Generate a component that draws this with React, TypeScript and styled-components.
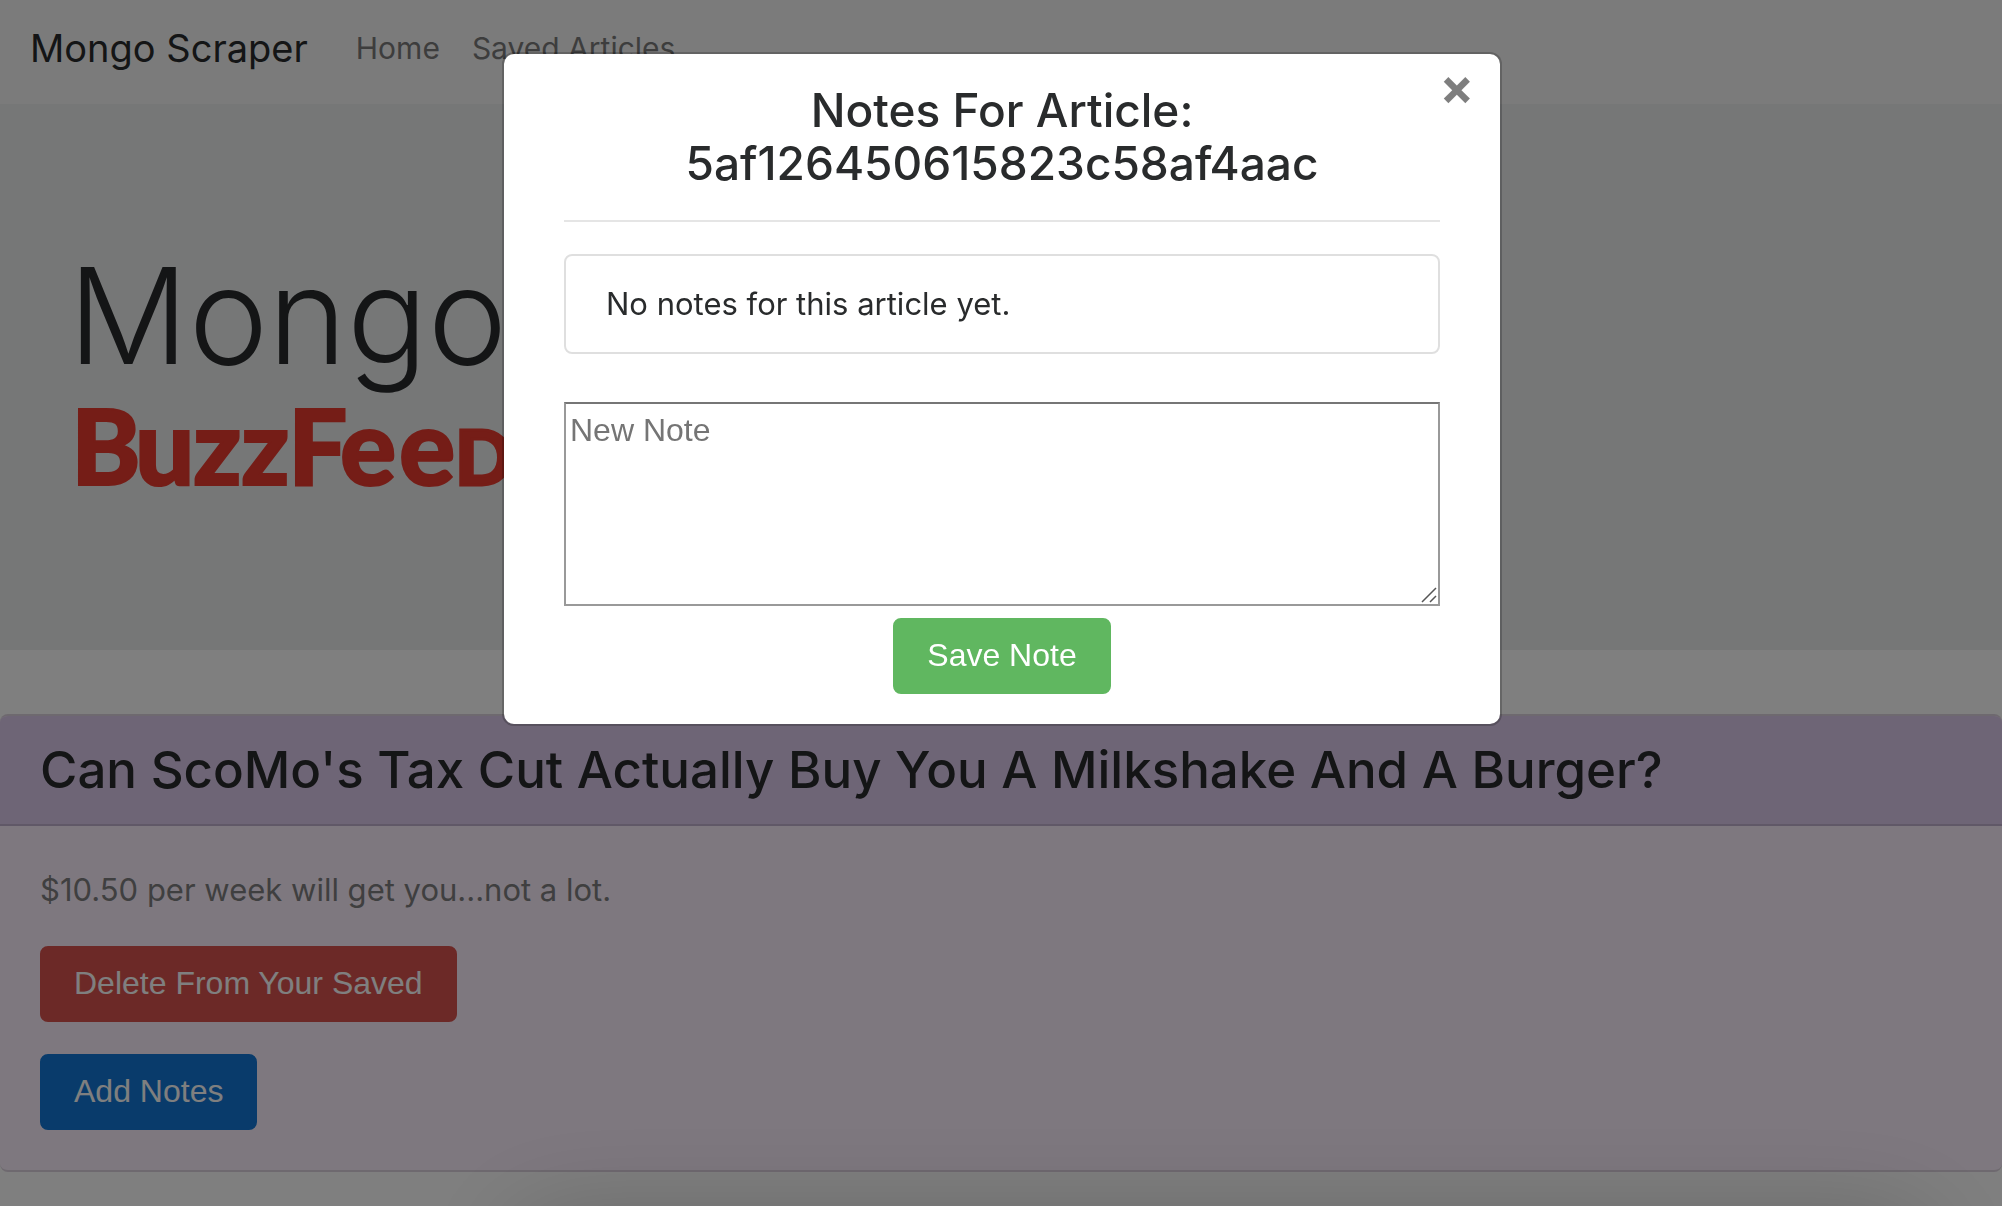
import React, { useState } from "react";
import styled, { createGlobalStyle } from "styled-components";

const uiFont = `Inter, "Liberation Sans", sans-serif`;
const controlFont = `"Liberation Sans", Arial, sans-serif`;

const GlobalStyle = createGlobalStyle`
  *, *::before, *::after { box-sizing: border-box; }
  body {
    margin: 0;
    background: #fff;
    color: #292b2c;
    font-family: ${uiFont};
    font-size: 31px;
    line-height: 48px;
    overflow: hidden;
  }
  h1, h2, h3, p { margin: 0; }
`;

const Page = styled.div`
  min-height: 100vh;
`;

const Navbar = styled.nav`
  display: flex;
  align-items: center;
  gap: 48px;
  padding: 18px 30px 26px;
  background: #f7f7f7;
`;

const Brand = styled.a`
  color: #292b2c;
  font-size: 38px;
  line-height: 60px;
  text-decoration: none;
`;

const NavLinks = styled.div`
  display: flex;
  gap: 32px;
`;

const NavLink = styled.a`
  color: #7b7b7b;
  font-size: 30px;
  text-decoration: none;
`;

const Jumbotron = styled.header`
  padding: 128px 68px;
  margin-bottom: 64px;
  background: #eceeef;
`;

const Display = styled.h1`
  margin-bottom: 8px;
  font-size: 134px;
  font-weight: 300;
  line-height: 166px;
  white-space: nowrap;
`;

const Logo = styled.svg`
  display: block;
  width: 480px;
  height: 116px;
  overflow: visible;
  fill: #eb3a2e;
  stroke: #eb3a2e;
  stroke-width: 2px;
  font-family: Lato, sans-serif;
  font-weight: 900;
`;

const Card = styled.article`
  border: solid rgba(0, 0, 0, 0.125);
  border-width: 2px 0;
  border-radius: 8px;
  background: #fdf1ff;
  overflow: hidden;
`;

const CardHeader = styled.div`
  padding: 24px 40px;
  border-bottom: 2px solid rgba(0, 0, 0, 0.125);
  background: #dccaec;
`;

const CardTitle = styled.h2`
  font-size: 51px;
  font-weight: 500;
  line-height: 60px;
`;

const CardBody = styled.div`
  display: flex;
  flex-direction: column;
  align-items: flex-start;
  gap: 32px;
  padding: 40px;
`;

const Summary = styled.p`
  color: #7f7f80;
`;

const tones = { danger: "#d9534f", primary: "#1277d6", success: "#60b760" };

const Button = styled.button<{ $tone: keyof typeof tones }>`
  padding: 13px 32px 15px;
  border: 2px solid ${({ $tone }) => tones[$tone]};
  border-radius: 8px;
  background: ${({ $tone }) => tones[$tone]};
  color: #fff;
  font-family: ${controlFont};
  font-size: 32px;
  line-height: 44px;
  cursor: pointer;
`;

const Backdrop = styled.div`
  position: fixed;
  inset: 0;
  background: rgba(0, 0, 0, 0.5);
  padding: 52px 15px 52px 17px;
  overflow: hidden;

  /* soft shade rising from the bottom edge of the window */
  &::after {
    content: "";
    position: absolute;
    left: 520px;
    right: 80px;
    bottom: -120px;
    height: 100px;
    box-shadow: 0 0 110px rgba(0, 0, 0, 0.24);
    pointer-events: none;
  }
`;

const Dialog = styled.section`
  position: relative;
  max-width: 1000px;
  margin: 0 auto;
  padding: 30px 60px;
  border: 2px solid rgba(0, 0, 0, 0.2);
  border-radius: 12px;
  background: #fff;
  background-clip: padding-box;
  text-align: center;
`;

const CloseButton = styled.button`
  position: absolute;
  top: 9px;
  right: 26px;
  padding: 0;
  border: 0;
  background: none;
  color: #000;
  font-family: ${uiFont};
  font-size: 51px;
  font-weight: 700;
  line-height: 48px;
  opacity: 0.5;
  cursor: pointer;
`;

const DialogTitle = styled.h3`
  font-size: 46px;
  font-weight: 500;
  line-height: 53px;
`;

const Divider = styled.hr`
  margin: 30px 0 32px;
  border: 0;
  border-top: 2px solid rgba(0, 0, 0, 0.1);
`;

const NoteList = styled.ul`
  margin: 0 0 48px;
  padding: 0;
  list-style: none;
  text-align: left;
`;

const NoteItem = styled.li`
  padding: 24px 40px;
  border: 2px solid rgba(0, 0, 0, 0.125);
  border-radius: 8px;
`;

const NoteForm = styled.form`
  display: flex;
  flex-direction: column;
  align-items: center;
  gap: 12px;
`;

const NoteField = styled.div`
  position: relative;
  width: 100%;
`;

const NoteInput = styled.textarea`
  display: block;
  width: 100%;
  height: 204px;
  padding: 4px;
  border: 2px solid #999;
  border-top-color: #767676;
  border-radius: 0;
  background: #fff;
  color: #292b2c;
  font-family: ${controlFont};
  font-size: 32px;
  line-height: 44px;
  resize: vertical;
  &::placeholder { color: #757575; opacity: 1; }
  &::-webkit-resizer { display: none; }
`;

const Grip = styled.svg`
  position: absolute;
  right: 3px;
  bottom: 3px;
  width: 16px;
  height: 16px;
  stroke: #555;
  stroke-width: 1.5px;
  fill: none;
  pointer-events: none;
`;

export default function App() {
  const [open, setOpen] = useState(true);
  const [note, setNote] = useState("");

  return (
    <>
      <GlobalStyle />
      <Page>
        <Navbar>
          <Brand href="#">Mongo Scraper</Brand>
          <NavLinks>
            <NavLink href="#">Home</NavLink>
            <NavLink href="#saved">Saved Articles</NavLink>
          </NavLinks>
        </Navbar>
        <Jumbotron>
          <Display>Mongo</Display>
          <Logo viewBox="0 0 480 116" role="img" aria-label="BuzzFeed">
            <text y="79" fontSize="105" x="3 67 125 173 220 272 331">BuzzFee</text>
            <text y="79" fontSize="76" strokeWidth="3" x="387">D</text>
          </Logo>
        </Jumbotron>
        <Card>
          <CardHeader>
            <CardTitle>Can ScoMo's Tax Cut Actually Buy You A Milkshake And A Burger?</CardTitle>
          </CardHeader>
          <CardBody>
            <Summary>$10.50 per week will get you...not a lot.</Summary>
            <Button type="button" $tone="danger">Delete From Your Saved</Button>
            <Button type="button" $tone="primary" onClick={() => setOpen(true)}>Add Notes</Button>
          </CardBody>
        </Card>
      </Page>
      {open && (
        <Backdrop>
          <Dialog role="dialog" aria-modal="true" aria-labelledby="notes-title">
            <CloseButton type="button" aria-label="Close" onClick={() => setOpen(false)}>×</CloseButton>
            <DialogTitle id="notes-title">
              Notes For Article:<br />5af126450615823c58af4aac
            </DialogTitle>
            <Divider />
            <NoteList>
              <NoteItem>No notes for this article yet.</NoteItem>
            </NoteList>
            <NoteForm onSubmit={(e) => e.preventDefault()}>
              <NoteField>
                <NoteInput
                  aria-label="New Note"
                  placeholder="New Note"
                  value={note}
                  onChange={(e) => setNote(e.target.value)}
                />
                <Grip viewBox="0 0 16 16" aria-hidden="true">
                  <path d="M1 15 15 1M9 15l6-6" />
                </Grip>
              </NoteField>
              <Button type="submit" $tone="success">Save Note</Button>
            </NoteForm>
          </Dialog>
        </Backdrop>
      )}
    </>
  );
}
